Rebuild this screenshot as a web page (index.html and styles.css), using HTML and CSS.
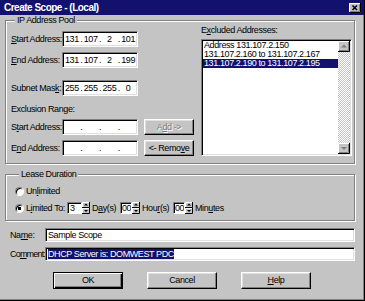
FILE: index.html
```
<!doctype html>
<html lang="en">
  <head>
    <meta charset="UTF-8" />
    <title>Create Scope - (Local)</title>
    <link rel="stylesheet" href="styles.css">
  </head>
  <body>
    <div class="window">
      <div class="titlebar">
        <span class="title">Create Scope - (Local)</span>
        <svg class="close-btn" width="12" height="10" viewBox="0 0 12 10">
          <rect width="12" height="10" fill="#c4c4c4"/>
          <path d="M0.5 9V0.5H11" stroke="#fff" fill="none"/>
          <path d="M0 9.5H11.5V0" stroke="#000" fill="none"/>
          <path d="M1 8.5H10.5V1" stroke="#808080" fill="none"/>
          <path d="M3.5 2.5L8 7M8 2.5L3.5 7" stroke="#000" stroke-width="1.5"/>
        </svg>
      </div>

      <div class="dialog">
        <fieldset class="group pool">
          <legend>IP Address Pool</legend>
          <div class="pool-body">
            <div class="pool-left">
              <div class="row">
                <label><u>S</u>tart Address:</label>
                <div class="ipbox"><span>131</span><i>.</i><span>107</span><i>.</i><span>2</span><i>.</i><span>101</span></div>
              </div>
              <div class="row row-end">
                <label><u>E</u>nd Address:</label>
                <div class="ipbox"><span>131</span><i>.</i><span>107</span><i>.</i><span>2</span><i>.</i><span>199</span></div>
              </div>
              <div class="row row-mask">
                <label>Subnet Mas<u>k</u>:</label>
                <div class="ipbox"><span>255</span><i>.</i><span>255</span><i>.</i><span>255</span><i>.</i><span>0</span></div>
              </div>
              <div class="range-label">Exclusion Range:</div>
              <div class="row row-xstart">
                <label>S<u>t</u>art Address:</label>
                <div class="ipbox"><span></span><i>.</i><span></span><i>.</i><span></span><i>.</i><span></span></div>
                <button class="btn small disabled">A<u>d</u>d -&gt;</button>
              </div>
              <div class="row row-end">
                <label>E<u>n</u>d Address:</label>
                <div class="ipbox"><span></span><i>.</i><span></span><i>.</i><span></span><i>.</i><span></span></div>
                <button class="btn small">&lt;- Remo<u>v</u>e</button>
              </div>
            </div>

            <div class="pool-right">
              <div class="list-label">E<u>x</u>cluded Addresses:</div>
              <div class="listbox">
                <ul class="list-items">
                  <li>Address 131.107.2.150</li>
                  <li>131.107.2.160 to 131.107.2.167</li>
                  <li class="selected">131.107.2.190 to 131.107.2.195</li>
                </ul>
                <div class="scrollbar">
                  <svg width="12" height="11" viewBox="0 0 12 11">
                    <rect width="12" height="11" fill="#c4c4c4"/>
                    <path d="M0.5 10V0.5H11" stroke="#fff" fill="none"/>
                    <path d="M0 10.5H11.5V0" stroke="#000" fill="none"/>
                    <path d="M1 9.5H10.5V1" stroke="#808080" fill="none"/>
                    <path d="M6 3.5L3 6.5H9Z" fill="#808080"/>
                  </svg>
                  <div class="track"></div>
                  <svg width="12" height="11" viewBox="0 0 12 11">
                    <rect width="12" height="11" fill="#c4c4c4"/>
                    <path d="M0.5 10V0.5H11" stroke="#fff" fill="none"/>
                    <path d="M0 10.5H11.5V0" stroke="#000" fill="none"/>
                    <path d="M1 9.5H10.5V1" stroke="#808080" fill="none"/>
                    <path d="M3 4H9L6 7Z" fill="#808080"/>
                  </svg>
                </div>
              </div>
            </div>
          </div>
        </fieldset>

        <fieldset class="group lease">
          <legend>Lease Duration</legend>
          <div class="lease-row">
            <span class="radio"></span>
            <span class="radio-text">Un<u>l</u>imited</span>
          </div>
          <div class="lease-row second">
            <span class="radio checked"></span>
            <span class="radio-text limited">L<u>i</u>mited To:</span>
            <span class="numbox wide">3</span>
            <svg class="spin" width="8" height="12" viewBox="0 0 8 12">
              <rect width="8" height="12" fill="#c4c4c4"/>
              <path d="M0.5 5V0.5H7" stroke="#fff" fill="none"/>
              <path d="M0 5.5H7.5V0" stroke="#000" fill="none"/>
              <path d="M0.5 11V6.5H7" stroke="#fff" fill="none"/>
              <path d="M0 11.5H7.5V6" stroke="#000" fill="none"/>
              <path d="M4 1.5L2 3.5H6Z" fill="#000"/>
              <path d="M2 8H6L4 10Z" fill="#000"/>
            </svg>
            <span class="unit days">D<u>a</u>y(s)</span>
            <span class="numbox">00</span>
            <svg class="spin" width="8" height="12" viewBox="0 0 8 12">
              <rect width="8" height="12" fill="#c4c4c4"/>
              <path d="M0.5 5V0.5H7" stroke="#fff" fill="none"/>
              <path d="M0 5.5H7.5V0" stroke="#000" fill="none"/>
              <path d="M0.5 11V6.5H7" stroke="#fff" fill="none"/>
              <path d="M0 11.5H7.5V6" stroke="#000" fill="none"/>
              <path d="M4 1.5L2 3.5H6Z" fill="#000"/>
              <path d="M2 8H6L4 10Z" fill="#000"/>
            </svg>
            <span class="unit hours">Hou<u>r</u>(s)</span>
            <span class="numbox">00</span>
            <svg class="spin" width="8" height="12" viewBox="0 0 8 12">
              <rect width="8" height="12" fill="#c4c4c4"/>
              <path d="M0.5 5V0.5H7" stroke="#fff" fill="none"/>
              <path d="M0 5.5H7.5V0" stroke="#000" fill="none"/>
              <path d="M0.5 11V6.5H7" stroke="#fff" fill="none"/>
              <path d="M0 11.5H7.5V6" stroke="#000" fill="none"/>
              <path d="M4 1.5L2 3.5H6Z" fill="#000"/>
              <path d="M2 8H6L4 10Z" fill="#000"/>
            </svg>
            <span class="unit minutes">Min<u>u</u>tes</span>
          </div>
        </fieldset>

        <div class="field-row name-row">
          <label>Na<u>m</u>e:</label>
          <div class="textbox">Sample Scope</div>
        </div>
        <div class="field-row comment-row">
          <label class="tight">Co<u>m</u>ment:</label>
          <div class="textbox"><span class="highlight">DHCP Server is: DOMWEST PDC</span></div>
        </div>

        <div class="buttons">
          <button class="btn default">OK</button>
          <button class="btn">Cancel</button>
          <button class="btn"><u>H</u>elp</button>
        </div>
      </div>
    </div>
  </body>
</html>
```

FILE: styles.css
```
* {
  box-sizing: border-box;
}
body {
  margin: 0;
  width: 365px;
  height: 301px;
  overflow: hidden;
  background-color: #c4c4c4;
  font-family: "Liberation Sans", Arial, sans-serif;
  font-size: 9px;
  letter-spacing: -0.4px;
  line-height: 11px;
  white-space: nowrap;
  color: #000;
}
u {
  text-decoration: underline;
  text-underline-offset: 1px;
}
.window {
  width: 365px;
  height: 301px;
  background-color: #c4c4c4;
  border-right: 1px solid #000;
  border-bottom: 1px solid #000;
  box-shadow: inset -1px -1px #808080;
}
.titlebar {
  height: 15px;
  display: flex;
  align-items: center;
  justify-content: space-between;
  padding: 0 3px 0 4px;
  background-color: #12126e;
  color: #fff;
  font-size: 10px;
  font-weight: bold;
  letter-spacing: -0.5px;
}
.close-btn {
  display: block;
}
.dialog {
  padding: 0 9px 0 5px;
}

/* group boxes */
.group {
  margin: 0;
  min-width: 0;
  border: 1px solid #808080;
  box-shadow: 1px 1px 0 #fff, inset 1px 1px 0 #fff;
}
.group legend {
  margin-left: 4px;
  padding: 0 2px;
  line-height: 11px;
  background-color: #c4c4c4;
}
.pool {
  padding: 0 2px 7px 5px;
}
.pool-body {
  display: flex;
}
.pool-left {
  width: 183px;
  padding-top: 5px;
}
.row {
  display: flex;
  align-items: center;
  height: 16px;
}
.row label {
  width: 51px;
}
.row-end {
  margin-top: 5px;
}
.row-mask {
  margin-top: 12px;
}
.range-label {
  margin-top: 8px;
}
.row-xstart {
  margin-top: 4px;
}
.ipbox {
  display: flex;
  align-items: center;
  width: 76px;
  height: 16px;
  padding: 0 1px;
  background-color: #fff;
  border: 1px solid;
  border-color: #808080 #fff #fff #808080;
  box-shadow: inset 1px 1px #000, inset -1px -1px #dfdfdf;
}
.ipbox span {
  flex: 1;
  text-align: center;
}
.ipbox i {
  font-style: normal;
  width: 3px;
  text-align: center;
}

.btn {
  font: inherit;
  letter-spacing: inherit;
  color: #000;
  padding: 0;
  background-color: #c4c4c4;
  border: 1px solid;
  border-color: #fff #000 #000 #fff;
  box-shadow: inset -1px -1px #808080, inset 1px 1px #dfdfdf;
}
.btn.small {
  width: 50px;
  height: 16px;
  margin-left: 6px;
}
.btn.disabled {
  color: #808080;
  text-shadow: 1px 1px #fff;
}

.pool-right {
  margin-left: 7px;
  width: 151px;
}
.list-label {
  margin-top: -1px;
}
.listbox {
  display: flex;
  height: 117px;
  margin-top: 3px;
  background-color: #fff;
  border: 1px solid;
  border-color: #808080 #fff #fff #808080;
  box-shadow: inset 1px 1px #000, inset -1px -1px #dfdfdf;
  padding: 1px;
}
.list-items {
  flex: 1;
  min-width: 0;
  overflow: hidden;
  margin: 0;
  padding: 0;
  list-style: none;
  line-height: 9px;
}
.list-items li {
  padding-left: 1px;
}
.list-items .selected {
  background-color: #12126e;
  color: #fff;
}
.scrollbar {
  width: 12px;
  display: flex;
  flex-direction: column;
}
.scrollbar svg {
  display: block;
}
.track {
  flex: 1;
  background-image: repeating-conic-gradient(#c4c4c4 0 25%, #fff 0 50%);
  background-size: 2px 2px;
}

/* lease duration */
.lease {
  margin-top: 5px;
  padding: 5px 2px 6px 9px;
}
.lease-row {
  display: flex;
  align-items: center;
  height: 12px;
}
.lease-row.second {
  margin-top: 5px;
}
.radio {
  width: 9px;
  height: 9px;
  border-radius: 50%;
  background-color: #fff;
  border: 1px solid;
  border-color: #808080 #fff #fff #808080;
  box-shadow: inset 1px 1px #000;
}
.radio.checked {
  background: radial-gradient(circle, #000 0 1.5px, #fff 2px);
}
.radio-text {
  margin-left: 2px;
}
.radio-text.limited {
  width: 41px;
}
.numbox {
  width: 12px;
  height: 12px;
  padding-left: 1px;
  overflow: hidden;
  line-height: 10px;
  background-color: #fff;
  border: 1px solid;
  border-color: #808080 #fff #fff #808080;
  box-shadow: inset 1px 1px #000;
}
.numbox.wide {
  width: 15px;
  padding-left: 2px;
}
.spin {
  display: block;
}
.unit {
  margin-left: 2px;
}
.unit.days {
  width: 28px;
}
.unit.hours {
  width: 31px;
}

/* name / comment */
.field-row {
  display: flex;
  align-items: center;
  padding-left: 5px;
}
.name-row {
  margin-top: 7px;
}
.comment-row {
  margin-top: 5px;
}
.field-row label {
  width: 35px;
}
.field-row label.tight {
  letter-spacing: -0.8px;
}
.textbox {
  flex: 1;
  height: 14px;
  padding: 1px 2px 0;
  background-color: #fff;
  border: 1px solid;
  border-color: #808080 #fff #fff #808080;
  box-shadow: inset 1px 1px #000, inset -1px -1px #dfdfdf;
}
.highlight {
  background-color: #12126e;
  color: #fff;
}

.buttons {
  display: flex;
  justify-content: center;
  gap: 24px;
  margin-top: 11px;
  padding-left: 4px;
}
.buttons .btn {
  width: 70px;
  height: 17px;
}
.btn.default {
  border-color: #000;
  box-shadow: inset 1px 1px #fff, inset -1px -1px #000, inset -2px -2px #808080;
}
```
